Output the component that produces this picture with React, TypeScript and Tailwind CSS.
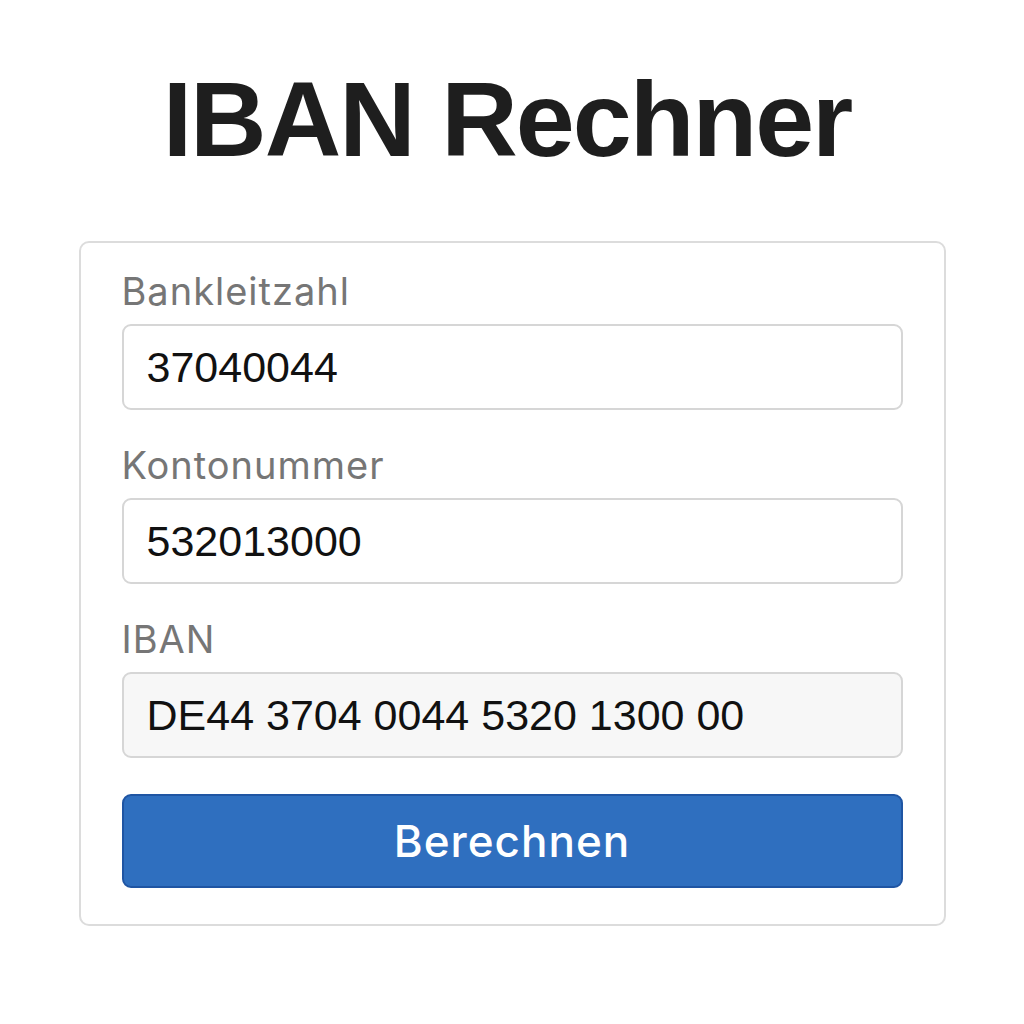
import React from "react";

type FieldProps = {
  label: string;
  value: string;
  readOnly?: boolean;
};

const Field: React.FC<FieldProps> = ({ label, value, readOnly }) => (
  <div className="flex flex-col">
    <label className="font-['Inter',sans-serif] text-[38px] leading-[44px] tracking-[1px] text-[#767676]">
      {label}
    </label>
    <div
      className={`mt-[11px] flex h-[86px] items-center rounded-[9px] border-2 border-[#d6d6d6] px-[23px] text-[43px] text-[#111111] ${
        readOnly ? "bg-[#f7f7f7]" : "bg-white"
      }`}
    >
      {value}
    </div>
  </div>
);

export default function App() {
  return (
    <div
      className="flex min-h-[1024px] flex-col items-center bg-white pt-[66px]"
      style={{ fontFamily: '"Liberation Sans", Arial, sans-serif' }}
    >
      <h1 className="pr-[10px] text-[106px] font-bold leading-none tracking-[-2px] text-[#1e1e1e]">
        IBAN Rechner
      </h1>
      <div className="mt-[69px] flex w-[867px] flex-col gap-[33px] rounded-[10px] border-2 border-[#dcdcdc] px-[41px] pb-[36px] pt-[26px]">
        <Field label="Bankleitzahl" value="37040044" />
        <Field label="Kontonummer" value="532013000" />
        <Field label="IBAN" value="DE44 3704 0044 5320 1300 00" readOnly />
        <button className="mt-[3px] h-[94px] rounded-[9px] border-2 border-[#1f55a3] bg-[#2f6fbf] font-['Inter',sans-serif] text-[44px] font-medium tracking-[1px] text-white">
          Berechnen
        </button>
      </div>
    </div>
  );
}
